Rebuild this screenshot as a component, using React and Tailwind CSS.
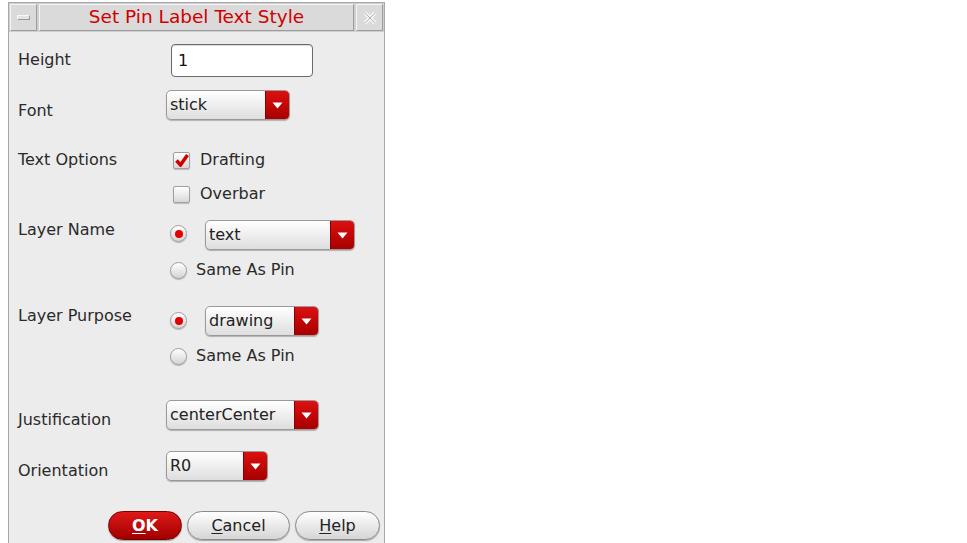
import React from 'react'

const font = { fontFamily: '"DejaVu Sans", "Liberation Sans", sans-serif' }

function Dropdown({ value, width }) {
  return (
    <div className={`flex h-[30px] ${width} rounded-[5px] border border-[#9a9a9a] bg-gradient-to-b from-white to-[#dedede] shadow-[0_1px_1px_rgba(0,0,0,0.25)] overflow-hidden`}>
      <div className="flex-1 flex items-center pl-[3px] text-[16px] text-[#222] leading-none">{value}</div>
      <div className="w-[24px] flex items-center justify-center bg-gradient-to-b from-[#dc1010] to-[#a80000] border-l border-[#8a0000]">
        <svg width="11" height="7" viewBox="0 0 11 7"><path d="M0.5 0.5h10L5.5 6.5z" fill="#fff" /></svg>
      </div>
    </div>
  )
}

function Checkbox({ checked }) {
  return (
    <div className="w-[17px] h-[17px] rounded-[2px] border border-[#a0a0a0] bg-gradient-to-b from-white to-[#d8d8d8] flex items-center justify-center shadow-[0_1px_1px_rgba(0,0,0,0.2)]">
      {checked && (
        <svg width="14" height="13" viewBox="0 0 14 13"><path d="M1.5 6.5L5.5 11L12.5 1" stroke="#d10000" strokeWidth="3.5" fill="none" /></svg>
      )}
    </div>
  )
}

function Radio({ checked }) {
  return (
    <div className="w-[17px] h-[17px] rounded-full border border-[#a0a0a0] bg-gradient-to-b from-white to-[#d4d4d4] flex items-center justify-center shadow-[0_1px_1px_rgba(0,0,0,0.25)]">
      {checked && <div className="w-[8px] h-[8px] rounded-full bg-[#e00000]" />}
    </div>
  )
}

function Label({ children, pt }) {
  return <div className={`w-[148px] shrink-0 text-[16px] leading-[20px] text-[#2a2a2a] ${pt}`}>{children}</div>
}

export default function App() {
  return (
    <div className="w-[967px] h-[543px] bg-white overflow-hidden" style={font}>
      <div className="ml-[8px] mt-[2px] w-[377px] h-[541px] bg-[#ececec] border-l border-r border-t border-[#a8a8a8] flex flex-col">
        {/* Title bar */}
        <div className="flex h-[29px] gap-[2px] px-[1px] pt-[1px] bg-[#cfcfcf]">
          <div className="w-[27px] h-[27px] bg-[#dadada] border-t border-l border-[#f4f4f4] border-r border-b border-r-[#9c9c9c] border-b-[#9c9c9c] flex items-center justify-center">
            <div className="w-[13px] h-[5px] bg-[#e4e4e4] border border-[#9a9a9a] border-t-[#f8f8f8] border-l-[#f8f8f8]" />
          </div>
          <div className="flex-1 h-[27px] bg-[#dadada] border-t border-l border-[#f4f4f4] border-r border-b border-r-[#9c9c9c] border-b-[#9c9c9c] flex items-center justify-center text-[18.5px] text-[#d00000] leading-none">
            Set Pin Label Text Style
          </div>
          <div className="w-[27px] h-[27px] bg-[#dadada] border-t border-l border-[#f4f4f4] border-r border-b border-r-[#9c9c9c] border-b-[#9c9c9c] flex items-center justify-center">
            <svg width="14" height="14" viewBox="0 0 14 14">
              <path d="M2 2L12 12M12 2L2 12" stroke="#f2f2f2" strokeWidth="4" />
              <path d="M2 2L12 12M12 2L2 12" stroke="#b8b8b8" strokeWidth="1" fill="none" />
            </svg>
          </div>
        </div>

        {/* Body */}
        <div className="flex flex-col pl-[9px]">
          <div className="flex h-[33px] mt-[12px]">
            <Label pt="pt-[6px]">Height</Label>
            <div className="ml-[5px] w-[142px] h-[33px] rounded-[4px] border border-[#6a6a6a] bg-white flex items-center pl-[6px] text-[16px] text-[#111] shadow-[inset_0_1px_1px_rgba(0,0,0,0.15)]">1</div>
          </div>

          <div className="flex h-[31px] mt-[13px]">
            <Label pt="pt-[11px]">Font</Label>
            <Dropdown value="stick" width="w-[124px]" />
          </div>

          <div className="flex h-[20px] mt-[29px] items-center">
            <Label pt="">Text Options</Label>
            <div className="ml-[7px]"><Checkbox checked /></div>
            <div className="ml-[10px] text-[16px] text-[#2a2a2a]">Drafting</div>
          </div>

          <div className="flex h-[20px] mt-[14px] items-center">
            <div className="w-[148px] shrink-0" />
            <div className="ml-[7px]"><Checkbox /></div>
            <div className="ml-[10px] text-[16px] text-[#2a2a2a]">Overbar</div>
          </div>

          <div className="flex h-[29px] mt-[16px]">
            <Label pt="">Layer Name</Label>
            <div className="ml-[4px] mt-[5px]"><Radio checked /></div>
            <div className="ml-[18px]"><Dropdown value="text" width="w-[150px]" /></div>
          </div>

          <div className="flex h-[20px] mt-[11px] items-center">
            <div className="w-[148px] shrink-0" />
            <div className="ml-[4px]"><Radio /></div>
            <div className="ml-[9px] text-[16px] text-[#2a2a2a]">Same As Pin</div>
          </div>

          <div className="flex h-[29px] mt-[26px]">
            <Label pt="">Layer Purpose</Label>
            <div className="ml-[4px] mt-[6px]"><Radio checked /></div>
            <div className="ml-[18px]"><Dropdown value="drawing" width="w-[114px]" /></div>
          </div>

          <div className="flex h-[20px] mt-[11px] items-center">
            <div className="w-[148px] shrink-0" />
            <div className="ml-[4px]"><Radio /></div>
            <div className="ml-[9px] text-[16px] text-[#2a2a2a]">Same As Pin</div>
          </div>

          <div className="flex h-[30px] mt-[34px]">
            <Label pt="pt-[10px]">Justification</Label>
            <Dropdown value="centerCenter" width="w-[153px]" />
          </div>

          <div className="flex h-[30px] mt-[21px]">
            <Label pt="pt-[10px]">Orientation</Label>
            <Dropdown value="R0" width="w-[102px]" />
          </div>

          <div className="flex h-[29px] mt-[30px] ml-[90px] gap-[5px]">
            <div className="w-[74px] h-[29px] rounded-full border border-[#7a0000] bg-gradient-to-b from-[#e01818] to-[#a00000] flex items-center justify-center text-[16px] font-bold text-white shadow-[0_1px_1px_rgba(0,0,0,0.3)]">
              <span><span className="underline underline-offset-2">O</span>K</span>
            </div>
            <div className="w-[103px] h-[29px] rounded-full border border-[#8a8a8a] bg-gradient-to-b from-white to-[#d6d6d6] flex items-center justify-center text-[16px] text-[#222] shadow-[0_1px_1px_rgba(0,0,0,0.3)]">
              <span><span className="underline underline-offset-2">C</span>ancel</span>
            </div>
            <div className="w-[85px] h-[29px] rounded-full border border-[#8a8a8a] bg-gradient-to-b from-white to-[#d6d6d6] flex items-center justify-center text-[16px] text-[#222] shadow-[0_1px_1px_rgba(0,0,0,0.3)]">
              <span><span className="underline underline-offset-2">H</span>elp</span>
            </div>
          </div>
        </div>
      </div>
    </div>
  )
}
